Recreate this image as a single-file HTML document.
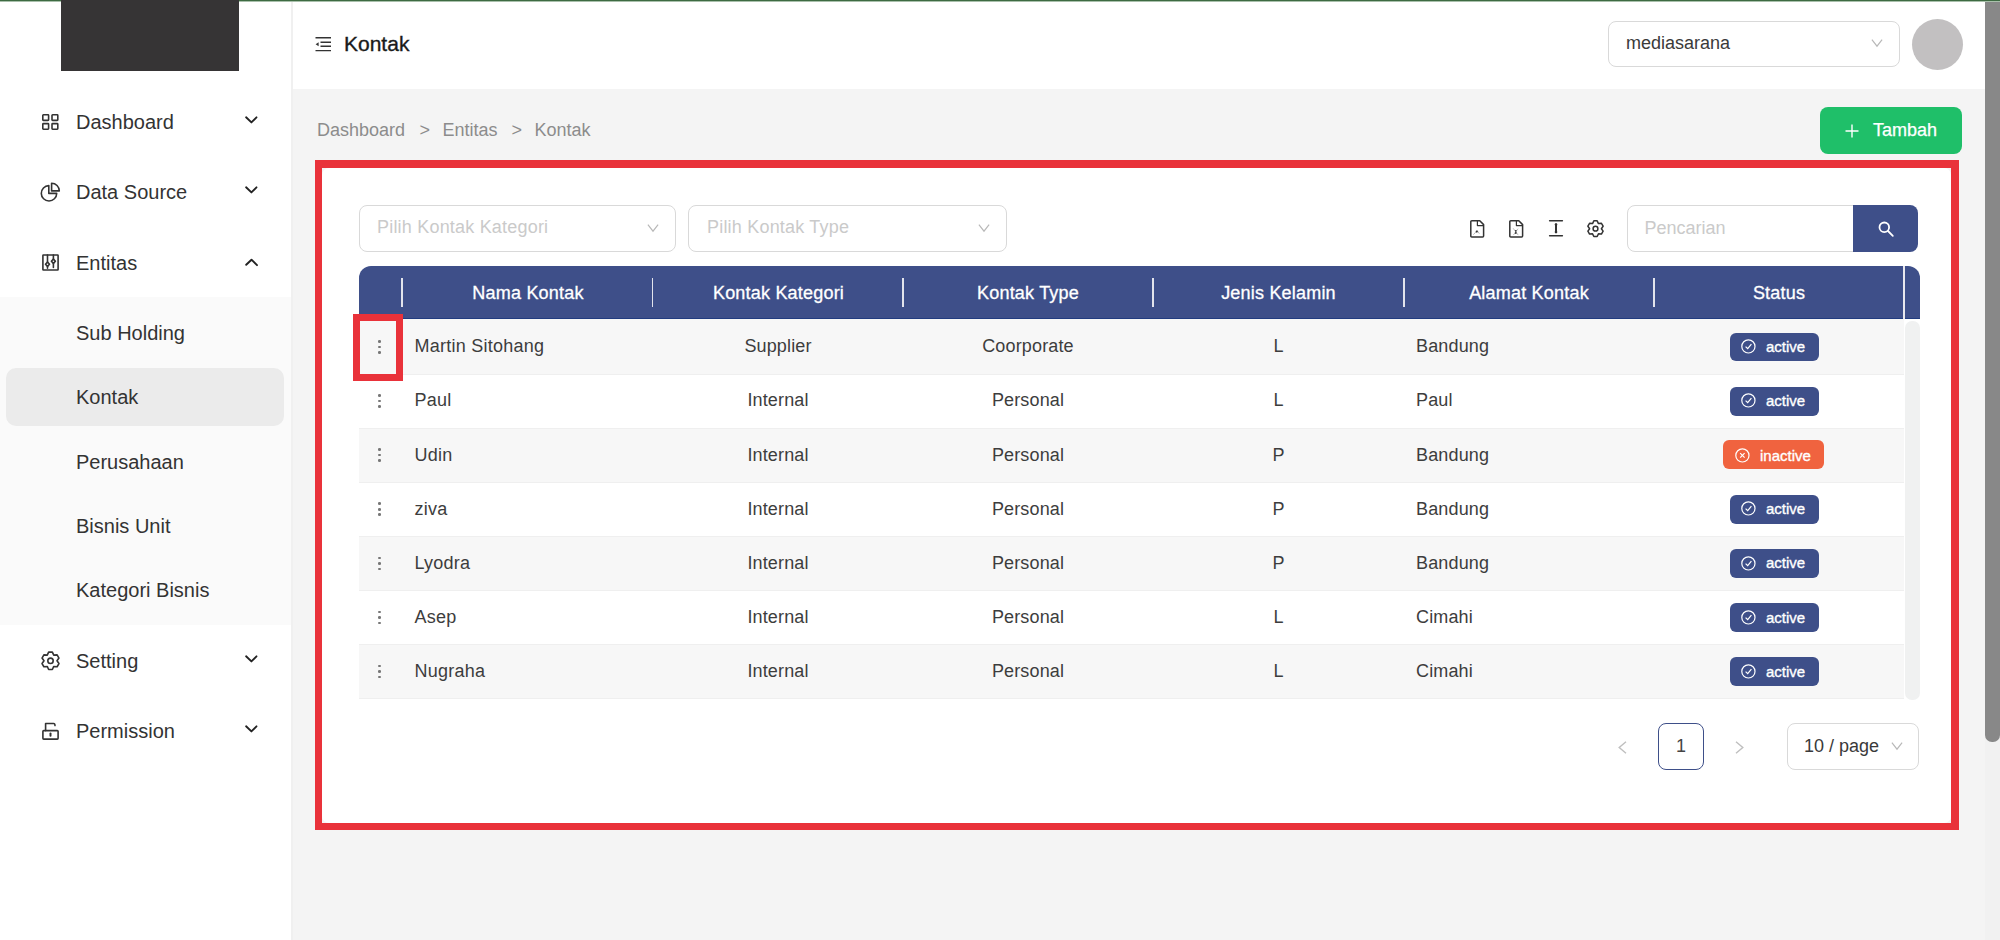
<!DOCTYPE html>
<html><head><meta charset="utf-8">
<style>
*{box-sizing:border-box;margin:0;padding:0}
html,body{width:2000px;height:940px;overflow:hidden;background:#f4f4f4;font-family:"Liberation Sans",sans-serif;color:#333}
.a{position:absolute}
.t{position:absolute;white-space:nowrap;line-height:1}
svg.i{position:absolute;overflow:visible}
</style></head><body>
<div class="a" style="left:1985px;top:0px;width:15px;height:940px;background:#f1f1f1"></div>
<div class="a" style="left:1985px;top:2px;width:15px;height:740px;background:#888;border-radius:0 0 7px 7px"></div>
<div class="a" style="left:0px;top:0px;width:291px;height:940px;background:#fff"></div>
<div class="a" style="left:291px;top:0px;width:2px;height:940px;background:#f0f0f0"></div>
<div class="a" style="left:293px;top:0px;width:1692px;height:89px;background:#fff"></div>
<div class="a" style="left:0px;top:0px;width:2000px;height:1px;background:#3e6b42"></div>
<div class="a" style="left:0px;top:1px;width:2000px;height:1px;background:#a9c0ab"></div>
<div class="a" style="left:61px;top:0px;width:178px;height:71px;background:#363435"></div>
<div class="a" style="left:0px;top:297px;width:291px;height:328px;background:#fafafa"></div>
<div class="a" style="left:6px;top:367.5px;width:278px;height:58px;background:#ebebeb;border-radius:10px"></div>
<div class="t" style="left:76px;top:112.07px;font-size:20px;color:#333;">Dashboard</div>
<div class="t" style="left:76px;top:182.07px;font-size:20px;color:#333;">Data Source</div>
<div class="t" style="left:76px;top:253.07px;font-size:20px;color:#333;">Entitas</div>
<div class="t" style="left:76px;top:323.07px;font-size:20px;color:#333;">Sub Holding</div>
<div class="t" style="left:76px;top:387.07px;font-size:20px;color:#333;">Kontak</div>
<div class="t" style="left:76px;top:451.77px;font-size:20px;color:#333;">Perusahaan</div>
<div class="t" style="left:76px;top:516.47px;font-size:20px;color:#333;">Bisnis Unit</div>
<div class="t" style="left:76px;top:580.27px;font-size:20px;color:#333;">Kategori Bisnis</div>
<div class="t" style="left:76px;top:651.07px;font-size:20px;color:#333;">Setting</div>
<div class="t" style="left:76px;top:721.07px;font-size:20px;color:#333;">Permission</div>
<svg class="i" style="left:42px;top:114px" width="17" height="16" viewBox="0 0 17 16" stroke="#333" stroke-width="1.6" fill="none" stroke-linecap="round" stroke-linejoin="round"><rect x="0.8" y="0.8" width="5.8" height="5.6" rx="0.6"/><rect x="10" y="0.8" width="5.8" height="5.6" rx="0.6"/><rect x="0.8" y="9.6" width="5.8" height="5.6" rx="0.6"/><rect x="10" y="9.6" width="5.8" height="5.6" rx="0.6"/></svg>
<svg class="i" style="left:41px;top:182px" width="19" height="20" viewBox="0 0 19 20" stroke="#333" stroke-width="1.6" fill="none" stroke-linecap="round" stroke-linejoin="round"><path d="M7.8 3.6 A7.7 7.7 0 1 0 15.7 11.4 L7.8 11.4 Z"/><path d="M10.6 1.2 L10.6 8.9 L18.3 8.9 A7.7 7.7 0 0 0 10.6 1.2 Z"/></svg>
<svg class="i" style="left:42px;top:254px" width="17" height="17" viewBox="0 0 17 17" stroke="#333" stroke-width="1.6" fill="none" stroke-linecap="round" stroke-linejoin="round"><rect x="0.9" y="1.0" width="15.2" height="15" rx="0.5"/><path d="M5.5 1 V14.2 M11.4 1 V13.4"/><path d="M5.5 8.0 l2 2.3 -2 2.3 -2 -2.3z" fill="#333"/><path d="M11.4 5.0 l2 2.3 -2 2.3 -2 -2.3z" fill="#333"/><circle cx="5.5" cy="10.3" r="0.8" fill="#fff" stroke="none"/><circle cx="11.4" cy="7.3" r="0.8" fill="#fff" stroke="none"/></svg>
<svg class="i" style="left:41px;top:651px" width="19" height="20" viewBox="0 0 19 20" stroke="#333" stroke-width="1.6" fill="none" stroke-linecap="round" stroke-linejoin="round"><path d="M6.25 4.17 L7.65 1.09 L11.35 1.09 L12.75 4.17 L12.75 4.17 L16.11 3.84 L17.96 7.05 L16.00 9.80 L16.00 9.80 L17.96 12.55 L16.11 15.76 L12.75 15.43 L12.75 15.43 L11.35 18.51 L7.65 18.51 L6.25 15.43 L6.25 15.43 L2.89 15.76 L1.04 12.55 L3.00 9.80 L3.00 9.80 L1.04 7.05 L2.89 3.84 L6.25 4.17Z"/><circle cx="9.5" cy="9.8" r="2.7"/></svg>
<svg class="i" style="left:42px;top:722px" width="17" height="18" viewBox="0 0 17 18" stroke="#333" stroke-width="1.6" fill="none" stroke-linecap="round" stroke-linejoin="round"><rect x="0.9" y="8.6" width="15.2" height="8.5" rx="0.8"/><path d="M3.6 8.6 V1.5 H11.6 Q13 1.5 13 3.6"/><path d="M8.5 11.6 V13.8" stroke-width="2"/></svg>
<svg class="i" style="left:245px;top:116px" width="13" height="8" viewBox="0 0 13 8" stroke="#222" stroke-width="1.9" fill="none" stroke-linecap="round" stroke-linejoin="round"><path d="M1.1 1.3 L6.4 6.4 L11.5 1.3"/></svg>
<svg class="i" style="left:245px;top:186px" width="13" height="8" viewBox="0 0 13 8" stroke="#222" stroke-width="1.9" fill="none" stroke-linecap="round" stroke-linejoin="round"><path d="M1.1 1.3 L6.4 6.4 L11.5 1.3"/></svg>
<svg class="i" style="left:245px;top:655px" width="13" height="8" viewBox="0 0 13 8" stroke="#222" stroke-width="1.9" fill="none" stroke-linecap="round" stroke-linejoin="round"><path d="M1.1 1.3 L6.4 6.4 L11.5 1.3"/></svg>
<svg class="i" style="left:245px;top:725px" width="13" height="8" viewBox="0 0 13 8" stroke="#222" stroke-width="1.9" fill="none" stroke-linecap="round" stroke-linejoin="round"><path d="M1.1 1.3 L6.4 6.4 L11.5 1.3"/></svg>
<svg class="i" style="left:245px;top:257px" width="13" height="9" viewBox="0 0 13 9" stroke="#222" stroke-width="1.9" fill="none" stroke-linecap="round" stroke-linejoin="round"><path d="M1.2 7.8 L6.5 2.7 L12 8.2"/></svg>
<svg class="i" style="left:315px;top:37px" width="17" height="15" viewBox="0 0 17 15" stroke="#333" stroke-width="1.4" fill="none"><path d="M0.5 0.8 H16 M5.5 5.2 H16 M5.5 9.2 H16 M0.5 13.6 H16"/><path d="M0.6 7.2 L3.6 5.2 V9.2z" fill="#333" stroke="none"/></svg>
<div class="t" style="left:344px;top:33.22px;font-size:21px;color:#1a1a1a;-webkit-text-stroke:0.35px #1a1a1a;">Kontak</div>
<div class="a" style="left:1608px;top:21px;width:292px;height:46px;border:1px solid #d9d9d9;border-radius:8px;background:#fff"></div>
<div class="t" style="left:1626px;top:34.36px;font-size:18px;color:#3a3a3a;">mediasarana</div>
<svg class="i" style="left:1871px;top:39px" width="12" height="8" viewBox="0 0 12 8" stroke="#b8b8b8" stroke-width="1.15" fill="none"><path d="M0.9 0.7 L6 7.2 L11.1 0.7"/></svg>
<div class="a" style="left:1912px;top:19px;width:51px;height:51px;border-radius:50%;background:#c2c0c1"></div>
<div class="t" style="left:317px;top:120.96px;font-size:18px;color:#8c8c8c;">Dashboard</div>
<div class="t" style="left:419.5px;top:120.96px;font-size:18px;color:#8c8c8c;">&gt;</div>
<div class="t" style="left:442.5px;top:120.96px;font-size:18px;color:#8c8c8c;">Entitas</div>
<div class="t" style="left:511.5px;top:120.96px;font-size:18px;color:#8c8c8c;">&gt;</div>
<div class="t" style="left:534.5px;top:120.96px;font-size:18px;color:#8c8c8c;">Kontak</div>
<div class="a" style="left:1820px;top:107px;width:142px;height:47px;border-radius:8px;background:#1fbf69"></div>
<svg class="i" style="left:1845px;top:123.5px" width="14" height="14" viewBox="0 0 14 14" stroke="#fff" stroke-width="1.4" fill="none"><path d="M7 0.5 V13.5 M0.5 7 H13.5"/></svg>
<div class="t" style="left:1873px;top:120.76px;font-size:18px;color:#fff;-webkit-text-stroke:0.25px #fff;">Tambah</div>
<div class="a" style="left:315px;top:160px;width:1644px;height:670.4px;border:solid #e9323a;border-width:8px 8px 7px 7px;background:#f4f4f4"></div>
<div class="a" style="left:322px;top:168px;width:1629px;height:655.4px;background:#fff;border-radius:7px"></div>
<div class="a" style="left:359px;top:205px;width:317px;height:46.5px;border:1px solid #d9d9d9;border-radius:8px;background:#fff"></div>
<div class="t" style="left:377px;top:218.26px;font-size:18px;color:#cacaca;letter-spacing:0.2px;">Pilih Kontak Kategori</div>
<svg class="i" style="left:647px;top:223.8px" width="12" height="8" viewBox="0 0 12 8" stroke="#b8b8b8" stroke-width="1.15" fill="none"><path d="M0.9 0.7 L6 7.2 L11.1 0.7"/></svg>
<div class="a" style="left:688px;top:205px;width:318.5px;height:46.5px;border:1px solid #d9d9d9;border-radius:8px;background:#fff"></div>
<div class="t" style="left:707px;top:218.26px;font-size:18px;color:#cacaca;letter-spacing:0.2px;">Pilih Kontak Type</div>
<svg class="i" style="left:977.8px;top:223.8px" width="12" height="8" viewBox="0 0 12 8" stroke="#b8b8b8" stroke-width="1.15" fill="none"><path d="M0.9 0.7 L6 7.2 L11.1 0.7"/></svg>
<svg class="i" style="left:1469.8px;top:219.5px" width="15" height="18" viewBox="0 0 15 18" stroke="#333" stroke-width="1.5" fill="none" stroke-linejoin="round" stroke-linecap="round"><path d="M1.8 0.8 H9.8 L13.6 4.6 V16 Q13.6 17 12.6 17 H1.8 Q0.8 17 0.8 16 V1.8 Q0.8 0.8 1.8 0.8 Z"/><path d="M7.4 0.9 V5.6 H13.5" stroke-width="1.2"/><path d="M3.6 14.4 L7.2 10.6 L9.2 13.4" stroke-width="0.8" stroke="#aaa"/><circle cx="6.8" cy="11.6" r="1.1" fill="#333" stroke="none"/></svg>
<svg class="i" style="left:1509.3px;top:219.5px" width="15" height="18" viewBox="0 0 15 18" stroke="#333" stroke-width="1.5" fill="none" stroke-linejoin="round" stroke-linecap="round"><path d="M1.8 0.8 H9.8 L13.6 4.6 V16 Q13.6 17 12.6 17 H1.8 Q0.8 17 0.8 16 V1.8 Q0.8 0.8 1.8 0.8 Z"/><path d="M7.4 0.9 V5.6 H13.5" stroke-width="1.2"/><path d="M4.4 8.6 L9 14.8 M8.8 9 L4.6 14.8" stroke-width="0.8" stroke="#aaa"/><circle cx="6.8" cy="10.8" r="0.9" fill="#333" stroke="none"/><circle cx="6.8" cy="13" r="0.9" fill="#333" stroke="none"/></svg>
<svg class="i" style="left:1549px;top:220px" width="14" height="17" viewBox="0 0 14 17" stroke="#333" stroke-width="1.5" fill="none" stroke-linejoin="round" stroke-linecap="round"><path d="M0.6 0.8 H13.4 M0.6 15.8 H13.4"/><path d="M7 4.4 V12.2" stroke-width="2"/><circle cx="7" cy="4.6" r="1.3" fill="#333" stroke="none"/><circle cx="7" cy="12" r="1.3" fill="#333" stroke="none"/></svg>
<svg class="i" style="left:1587px;top:219.5px" width="17" height="18" viewBox="0 0 17 18" stroke="#333" stroke-width="1.5" fill="none" stroke-linejoin="round" stroke-linecap="round"><path d="M5.55 3.59 L6.84 0.87 L10.16 0.87 L11.45 3.59 L11.45 3.59 L14.45 3.35 L16.11 6.23 L14.40 8.70 L14.40 8.70 L16.11 11.17 L14.45 14.05 L11.45 13.81 L11.45 13.81 L10.16 16.53 L6.84 16.53 L5.55 13.81 L5.55 13.81 L2.55 14.05 L0.89 11.17 L2.60 8.70 L2.60 8.70 L0.89 6.23 L2.55 3.35 L5.55 3.59Z"/><circle cx="8.5" cy="8.7" r="2.4"/></svg>
<div class="a" style="left:1627px;top:205px;width:240px;height:46.5px;border:1px solid #d9d9d9;border-radius:8px 0 0 8px;background:#fff"></div>
<div class="a" style="left:1853px;top:205px;width:65px;height:46.5px;border-radius:0 8px 8px 0;background:#3e4f89"></div>
<div class="t" style="left:1644.5px;top:218.56px;font-size:18px;color:#cacaca;">Pencarian</div>
<svg class="i" style="left:1878px;top:220.5px" width="16" height="16" viewBox="0 0 16 16" stroke="#fff" stroke-width="1.8" fill="none" stroke-linecap="round"><circle cx="6.3" cy="6.3" r="4.8"/><path d="M10 10 L14.8 14.8"/></svg>
<div class="a" style="left:359px;top:266px;width:1545px;height:52.8px;background:#3e4f89;border-radius:12px 0 0 0;border-bottom:1.5px solid #213c80"></div>
<div class="a" style="left:1905px;top:266px;width:14.5px;height:52.8px;background:#3e4f89;border-radius:0 12px 0 0;border-bottom:1.5px solid #213c80"></div>
<div class="a" style="left:1903px;top:266px;width:2px;height:52.8px;background:#e8e8ee"></div>
<div class="a" style="left:401.2px;top:278px;width:1.8px;height:29px;background:#e2e4ec"></div>
<div class="a" style="left:651.6px;top:278px;width:1.8px;height:29px;background:#e2e4ec"></div>
<div class="a" style="left:902px;top:278px;width:1.8px;height:29px;background:#e2e4ec"></div>
<div class="a" style="left:1152.4px;top:278px;width:1.8px;height:29px;background:#e2e4ec"></div>
<div class="a" style="left:1402.8px;top:278px;width:1.8px;height:29px;background:#e2e4ec"></div>
<div class="a" style="left:1653.3px;top:278px;width:1.8px;height:29px;background:#e2e4ec"></div>
<div class="t" style="left:528px;top:283.56px;font-size:18px;color:#fff;transform:translateX(-50%);-webkit-text-stroke:0.3px #fff;letter-spacing:0.2px;">Nama Kontak</div>
<div class="t" style="left:778.5px;top:283.56px;font-size:18px;color:#fff;transform:translateX(-50%);-webkit-text-stroke:0.3px #fff;letter-spacing:0.2px;">Kontak Kategori</div>
<div class="t" style="left:1028px;top:283.56px;font-size:18px;color:#fff;transform:translateX(-50%);-webkit-text-stroke:0.3px #fff;letter-spacing:0.2px;">Kontak Type</div>
<div class="t" style="left:1278.5px;top:283.56px;font-size:18px;color:#fff;transform:translateX(-50%);-webkit-text-stroke:0.3px #fff;letter-spacing:0.2px;">Jenis Kelamin</div>
<div class="t" style="left:1529px;top:283.56px;font-size:18px;color:#fff;transform:translateX(-50%);-webkit-text-stroke:0.3px #fff;letter-spacing:0.2px;">Alamat Kontak</div>
<div class="t" style="left:1779px;top:283.56px;font-size:18px;color:#fff;transform:translateX(-50%);-webkit-text-stroke:0.3px #fff;letter-spacing:0.2px;">Status</div>
<div class="a" style="left:359px;top:318.8px;width:1545px;height:56.2px;background:#f7f7f7;border-bottom:1px solid #efefef"></div>
<div class="a" style="left:377.9px;top:340.1px;width:2.7px;height:2.7px;background:#777;border-radius:50%"></div>
<div class="a" style="left:377.9px;top:345.6px;width:2.7px;height:2.7px;background:#777;border-radius:50%"></div>
<div class="a" style="left:377.9px;top:351.1px;width:2.7px;height:2.7px;background:#777;border-radius:50%"></div>
<div class="t" style="left:414.5px;top:337.36px;font-size:18px;color:#3d3d3d;letter-spacing:0.25px;">Martin Sitohang</div>
<div class="t" style="left:778px;top:337.36px;font-size:18px;color:#3d3d3d;transform:translateX(-50%);letter-spacing:0.15px;">Supplier</div>
<div class="t" style="left:1028px;top:337.36px;font-size:18px;color:#3d3d3d;transform:translateX(-50%);letter-spacing:0.15px;">Coorporate</div>
<div class="t" style="left:1278.5px;top:337.36px;font-size:18px;color:#3d3d3d;transform:translateX(-50%);">L</div>
<div class="t" style="left:1416px;top:337.36px;font-size:18px;color:#3d3d3d;letter-spacing:0.15px;">Bandung</div>
<div class="a" style="left:1729.5px;top:332.7px;width:89px;height:28.8px;background:#3e4f89;border-radius:6px"></div>
<svg class="i" style="left:1740.8px;top:339.1px" width="15" height="15" viewBox="0 0 15 15" stroke="#fff" stroke-width="1.2" fill="none"><circle cx="7.4" cy="7.4" r="6.6"/><path d="M4.6 7.6 L6.7 9.7 L10.4 5.2"/></svg>
<div class="t" style="left:1766px;top:339.00px;font-size:15px;color:#fff;-webkit-text-stroke:0.35px #fff;">active</div>
<div class="a" style="left:359px;top:375px;width:1545px;height:54px;background:#fff;border-bottom:1px solid #efefef"></div>
<div class="a" style="left:377.9px;top:394.2px;width:2.7px;height:2.7px;background:#777;border-radius:50%"></div>
<div class="a" style="left:377.9px;top:399.7px;width:2.7px;height:2.7px;background:#777;border-radius:50%"></div>
<div class="a" style="left:377.9px;top:405.2px;width:2.7px;height:2.7px;background:#777;border-radius:50%"></div>
<div class="t" style="left:414.5px;top:391.46px;font-size:18px;color:#3d3d3d;letter-spacing:0.25px;">Paul</div>
<div class="t" style="left:778px;top:391.46px;font-size:18px;color:#3d3d3d;transform:translateX(-50%);letter-spacing:0.15px;">Internal</div>
<div class="t" style="left:1028px;top:391.46px;font-size:18px;color:#3d3d3d;transform:translateX(-50%);letter-spacing:0.15px;">Personal</div>
<div class="t" style="left:1278.5px;top:391.46px;font-size:18px;color:#3d3d3d;transform:translateX(-50%);">L</div>
<div class="t" style="left:1416px;top:391.46px;font-size:18px;color:#3d3d3d;letter-spacing:0.15px;">Paul</div>
<div class="a" style="left:1729.5px;top:386.8px;width:89px;height:28.8px;background:#3e4f89;border-radius:6px"></div>
<svg class="i" style="left:1740.8px;top:393.2px" width="15" height="15" viewBox="0 0 15 15" stroke="#fff" stroke-width="1.2" fill="none"><circle cx="7.4" cy="7.4" r="6.6"/><path d="M4.6 7.6 L6.7 9.7 L10.4 5.2"/></svg>
<div class="t" style="left:1766px;top:393.10px;font-size:15px;color:#fff;-webkit-text-stroke:0.35px #fff;">active</div>
<div class="a" style="left:359px;top:429px;width:1545px;height:54px;background:#f7f7f7;border-bottom:1px solid #efefef"></div>
<div class="a" style="left:377.9px;top:448.3px;width:2.7px;height:2.7px;background:#777;border-radius:50%"></div>
<div class="a" style="left:377.9px;top:453.8px;width:2.7px;height:2.7px;background:#777;border-radius:50%"></div>
<div class="a" style="left:377.9px;top:459.3px;width:2.7px;height:2.7px;background:#777;border-radius:50%"></div>
<div class="t" style="left:414.5px;top:445.56px;font-size:18px;color:#3d3d3d;letter-spacing:0.25px;">Udin</div>
<div class="t" style="left:778px;top:445.56px;font-size:18px;color:#3d3d3d;transform:translateX(-50%);letter-spacing:0.15px;">Internal</div>
<div class="t" style="left:1028px;top:445.56px;font-size:18px;color:#3d3d3d;transform:translateX(-50%);letter-spacing:0.15px;">Personal</div>
<div class="t" style="left:1278.5px;top:445.56px;font-size:18px;color:#3d3d3d;transform:translateX(-50%);">P</div>
<div class="t" style="left:1416px;top:445.56px;font-size:18px;color:#3d3d3d;letter-spacing:0.15px;">Bandung</div>
<div class="a" style="left:1723.3px;top:440.4px;width:101px;height:29px;background:#f0633f;border-radius:6px"></div>
<svg class="i" style="left:1735px;top:447.5px" width="15" height="15" viewBox="0 0 15 15" stroke="#fff" stroke-width="1.2" fill="none"><circle cx="7.4" cy="7.4" r="6.6"/><path d="M5.2 5.2 L9.6 9.6 M9.6 5.2 L5.2 9.6"/></svg>
<div class="t" style="left:1760px;top:448.40px;font-size:15px;color:#fff;-webkit-text-stroke:0.35px #fff;">inactive</div>
<div class="a" style="left:359px;top:483px;width:1545px;height:54px;background:#fff;border-bottom:1px solid #efefef"></div>
<div class="a" style="left:377.9px;top:502.4px;width:2.7px;height:2.7px;background:#777;border-radius:50%"></div>
<div class="a" style="left:377.9px;top:507.9px;width:2.7px;height:2.7px;background:#777;border-radius:50%"></div>
<div class="a" style="left:377.9px;top:513.4px;width:2.7px;height:2.7px;background:#777;border-radius:50%"></div>
<div class="t" style="left:414.5px;top:499.66px;font-size:18px;color:#3d3d3d;letter-spacing:0.25px;">ziva</div>
<div class="t" style="left:778px;top:499.66px;font-size:18px;color:#3d3d3d;transform:translateX(-50%);letter-spacing:0.15px;">Internal</div>
<div class="t" style="left:1028px;top:499.66px;font-size:18px;color:#3d3d3d;transform:translateX(-50%);letter-spacing:0.15px;">Personal</div>
<div class="t" style="left:1278.5px;top:499.66px;font-size:18px;color:#3d3d3d;transform:translateX(-50%);">P</div>
<div class="t" style="left:1416px;top:499.66px;font-size:18px;color:#3d3d3d;letter-spacing:0.15px;">Bandung</div>
<div class="a" style="left:1729.5px;top:495.0px;width:89px;height:28.8px;background:#3e4f89;border-radius:6px"></div>
<svg class="i" style="left:1740.8px;top:501.4px" width="15" height="15" viewBox="0 0 15 15" stroke="#fff" stroke-width="1.2" fill="none"><circle cx="7.4" cy="7.4" r="6.6"/><path d="M4.6 7.6 L6.7 9.7 L10.4 5.2"/></svg>
<div class="t" style="left:1766px;top:501.30px;font-size:15px;color:#fff;-webkit-text-stroke:0.35px #fff;">active</div>
<div class="a" style="left:359px;top:537px;width:1545px;height:54px;background:#f7f7f7;border-bottom:1px solid #efefef"></div>
<div class="a" style="left:377.9px;top:556.5px;width:2.7px;height:2.7px;background:#777;border-radius:50%"></div>
<div class="a" style="left:377.9px;top:562.0px;width:2.7px;height:2.7px;background:#777;border-radius:50%"></div>
<div class="a" style="left:377.9px;top:567.5px;width:2.7px;height:2.7px;background:#777;border-radius:50%"></div>
<div class="t" style="left:414.5px;top:553.76px;font-size:18px;color:#3d3d3d;letter-spacing:0.25px;">Lyodra</div>
<div class="t" style="left:778px;top:553.76px;font-size:18px;color:#3d3d3d;transform:translateX(-50%);letter-spacing:0.15px;">Internal</div>
<div class="t" style="left:1028px;top:553.76px;font-size:18px;color:#3d3d3d;transform:translateX(-50%);letter-spacing:0.15px;">Personal</div>
<div class="t" style="left:1278.5px;top:553.76px;font-size:18px;color:#3d3d3d;transform:translateX(-50%);">P</div>
<div class="t" style="left:1416px;top:553.76px;font-size:18px;color:#3d3d3d;letter-spacing:0.15px;">Bandung</div>
<div class="a" style="left:1729.5px;top:549.1px;width:89px;height:28.8px;background:#3e4f89;border-radius:6px"></div>
<svg class="i" style="left:1740.8px;top:555.5px" width="15" height="15" viewBox="0 0 15 15" stroke="#fff" stroke-width="1.2" fill="none"><circle cx="7.4" cy="7.4" r="6.6"/><path d="M4.6 7.6 L6.7 9.7 L10.4 5.2"/></svg>
<div class="t" style="left:1766px;top:555.40px;font-size:15px;color:#fff;-webkit-text-stroke:0.35px #fff;">active</div>
<div class="a" style="left:359px;top:591px;width:1545px;height:54px;background:#fff;border-bottom:1px solid #efefef"></div>
<div class="a" style="left:377.9px;top:610.6px;width:2.7px;height:2.7px;background:#777;border-radius:50%"></div>
<div class="a" style="left:377.9px;top:616.1px;width:2.7px;height:2.7px;background:#777;border-radius:50%"></div>
<div class="a" style="left:377.9px;top:621.6px;width:2.7px;height:2.7px;background:#777;border-radius:50%"></div>
<div class="t" style="left:414.5px;top:607.86px;font-size:18px;color:#3d3d3d;letter-spacing:0.25px;">Asep</div>
<div class="t" style="left:778px;top:607.86px;font-size:18px;color:#3d3d3d;transform:translateX(-50%);letter-spacing:0.15px;">Internal</div>
<div class="t" style="left:1028px;top:607.86px;font-size:18px;color:#3d3d3d;transform:translateX(-50%);letter-spacing:0.15px;">Personal</div>
<div class="t" style="left:1278.5px;top:607.86px;font-size:18px;color:#3d3d3d;transform:translateX(-50%);">L</div>
<div class="t" style="left:1416px;top:607.86px;font-size:18px;color:#3d3d3d;letter-spacing:0.15px;">Cimahi</div>
<div class="a" style="left:1729.5px;top:603.2px;width:89px;height:28.8px;background:#3e4f89;border-radius:6px"></div>
<svg class="i" style="left:1740.8px;top:609.6px" width="15" height="15" viewBox="0 0 15 15" stroke="#fff" stroke-width="1.2" fill="none"><circle cx="7.4" cy="7.4" r="6.6"/><path d="M4.6 7.6 L6.7 9.7 L10.4 5.2"/></svg>
<div class="t" style="left:1766px;top:609.50px;font-size:15px;color:#fff;-webkit-text-stroke:0.35px #fff;">active</div>
<div class="a" style="left:359px;top:645px;width:1545px;height:54px;background:#f7f7f7;border-bottom:1px solid #efefef"></div>
<div class="a" style="left:377.9px;top:664.7px;width:2.7px;height:2.7px;background:#777;border-radius:50%"></div>
<div class="a" style="left:377.9px;top:670.2px;width:2.7px;height:2.7px;background:#777;border-radius:50%"></div>
<div class="a" style="left:377.9px;top:675.7px;width:2.7px;height:2.7px;background:#777;border-radius:50%"></div>
<div class="t" style="left:414.5px;top:661.96px;font-size:18px;color:#3d3d3d;letter-spacing:0.25px;">Nugraha</div>
<div class="t" style="left:778px;top:661.96px;font-size:18px;color:#3d3d3d;transform:translateX(-50%);letter-spacing:0.15px;">Internal</div>
<div class="t" style="left:1028px;top:661.96px;font-size:18px;color:#3d3d3d;transform:translateX(-50%);letter-spacing:0.15px;">Personal</div>
<div class="t" style="left:1278.5px;top:661.96px;font-size:18px;color:#3d3d3d;transform:translateX(-50%);">L</div>
<div class="t" style="left:1416px;top:661.96px;font-size:18px;color:#3d3d3d;letter-spacing:0.15px;">Cimahi</div>
<div class="a" style="left:1729.5px;top:657.3px;width:89px;height:28.8px;background:#3e4f89;border-radius:6px"></div>
<svg class="i" style="left:1740.8px;top:663.7px" width="15" height="15" viewBox="0 0 15 15" stroke="#fff" stroke-width="1.2" fill="none"><circle cx="7.4" cy="7.4" r="6.6"/><path d="M4.6 7.6 L6.7 9.7 L10.4 5.2"/></svg>
<div class="t" style="left:1766px;top:663.60px;font-size:15px;color:#fff;-webkit-text-stroke:0.35px #fff;">active</div>
<div class="a" style="left:1905px;top:321px;width:14.5px;height:378.8px;background:#f0f1f1;border-radius:7px"></div>
<div class="a" style="left:353.3px;top:313.6px;width:49.7px;height:67px;border:7px solid #e9323a"></div>
<svg class="i" style="left:1618px;top:740.5px" width="9" height="13" viewBox="0 0 9 13" stroke="#bfbfbf" stroke-width="1.4" fill="none"><path d="M8 0.8 L1.2 6.5 L8 12.2"/></svg>
<div class="a" style="left:1658px;top:723px;width:46px;height:46.5px;border:1.5px solid #3e4f89;border-radius:8px;background:#fff"></div>
<div class="t" style="left:1681px;top:737.36px;font-size:18px;color:#444;transform:translateX(-50%);">1</div>
<svg class="i" style="left:1735px;top:740.5px" width="9" height="13" viewBox="0 0 9 13" stroke="#bfbfbf" stroke-width="1.4" fill="none"><path d="M1 0.8 L7.8 6.5 L1 12.2"/></svg>
<div class="a" style="left:1786.5px;top:723px;width:132px;height:46.5px;border:1px solid #d9d9d9;border-radius:8px;background:#fff"></div>
<div class="t" style="left:1804px;top:737.36px;font-size:18px;color:#3a3a3a;">10 / page</div>
<svg class="i" style="left:1890.5px;top:742px" width="12" height="8" viewBox="0 0 12 8" stroke="#b8b8b8" stroke-width="1.15" fill="none"><path d="M0.9 0.7 L6 7.2 L11.1 0.7"/></svg>
</body></html>
